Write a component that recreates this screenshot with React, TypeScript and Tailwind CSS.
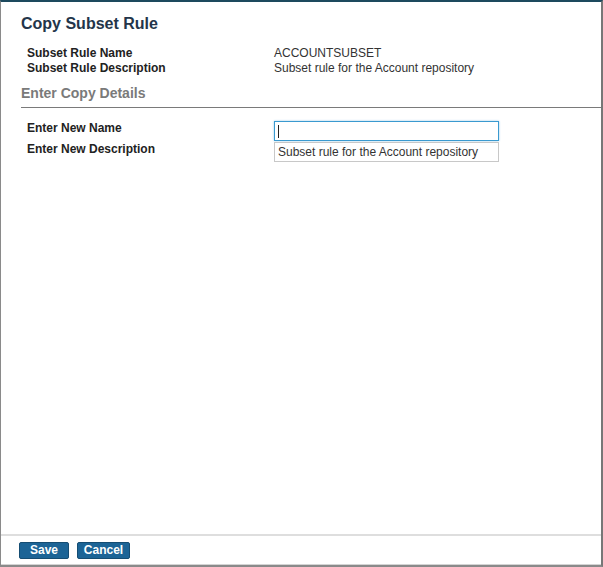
import React from 'react';

const labelCls = 'text-[12px] font-bold text-[#222] leading-[15px]';
const valueCls = 'text-[12px] text-[#333] leading-[15px]';

export default function App() {
  return (
    <div
      className="w-[603px] h-[567px] flex flex-col bg-white border-t-2 border-t-[#1d4a5e] border-l border-l-[#8a8a8a] border-r-2 border-r-[#777] border-b-2 border-b-[#8a8a8a]"
      style={{ fontFamily: '"Liberation Sans", Arial, sans-serif' }}
    >
      <div className="flex-1 flex flex-col">
        <h1 className="pl-[20px] pt-[12px] text-[16px] font-bold text-[#23354a] leading-[20px]">
          Copy Subset Rule
        </h1>

        <div className="pl-[26px] pt-[12px] grid grid-cols-[247px_1fr]">
          <span className={labelCls}>Subset Rule Name</span>
          <span className={valueCls}>ACCOUNTSUBSET</span>
          <span className={labelCls}>Subset Rule Description</span>
          <span className={valueCls}>Subset rule for the Account repository</span>
        </div>

        <h2 className="ml-[20px] mt-[9px] pb-[5px] text-[14px] font-bold text-[#7a7a7a] leading-[17px] border-b border-b-[#7a7a7a]">
          Enter Copy Details
        </h2>

        <div className="pl-[26px] pt-[13px] grid grid-cols-[247px_225px] gap-y-[1px]">
          <span className={labelCls}>Enter New Name</span>
          <div className="h-[20px] border border-[#3a9ad0] shadow-[0_0_2px_#9cc9e6] flex items-center px-[3px]">
            <span className="w-px h-[13px] bg-[#222]" />
          </div>
          <span className={labelCls}>Enter New Description</span>
          <div className="h-[20px] border border-[#c8c8c8] flex items-center px-[3px] text-[12px] text-[#333]">
            Subset rule for the Account repository
          </div>
        </div>
      </div>

      <div className="h-[31px] border-t-2 border-t-[#dedede] flex items-start gap-[8px] pl-[18px] pt-[6px] border-b border-b-[#d4d4d4]">
        <button className="h-[17px] w-[50px] rounded-[2px] bg-[#1c6496] border border-[#154d73] text-white text-[12px] font-bold leading-[15px]">
          Save
        </button>
        <button className="h-[17px] w-[53px] rounded-[2px] bg-[#1c6496] border border-[#154d73] text-white text-[12px] font-bold leading-[15px]">
          Cancel
        </button>
      </div>
    </div>
  );
}
